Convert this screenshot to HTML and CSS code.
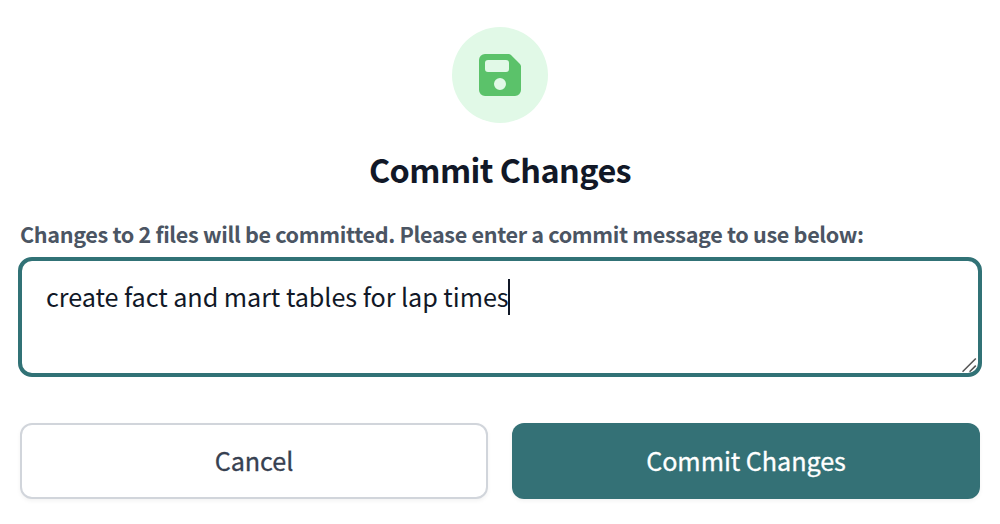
FILE: index.html
```html
<!DOCTYPE html>
<html lang="en">
<head>
<meta charset="utf-8">
<title>Commit Changes</title>
<link rel="stylesheet" href="styles.css">
</head>
<body>
<main class="dialog">
  <div class="badge">
    <svg class="badge-icon" viewBox="0 0 42 42" aria-hidden="true">
      <path fill="#5bc26a" fill-rule="evenodd" d="M6 0H29.5Q31 0 32 1L41 10Q42 11 42 12.5V36a6 6 0 0 1-6 6H6a6 6 0 0 1-6-6V6a6 6 0 0 1 6-6ZM9 6a3 3 0 0 0-3 3v6a3 3 0 0 0 3 3H27a3 3 0 0 0 3-3V9a3 3 0 0 0-3-3ZM21 24a6 6 0 1 0 0 12a6 6 0 0 0 0-12Z"/>
    </svg>
  </div>
  <h1 class="title">Commit Changes</h1>
  <p class="label">Changes to 2 files will be committed. Please enter a commit message to use below:</p>
  <div class="message" role="textbox" aria-multiline="true">
    <span class="message-text">create fact and mart tables for lap times</span><span class="caret"></span>
    <svg class="grip" viewBox="0 0 16 16" aria-hidden="true"><path d="M.5 14.8 13.8 1.5M7.6 14.8 13.8 8.6" stroke="#555" stroke-width="1.6" fill="none"/></svg>
  </div>
  <div class="actions">
    <button class="button cancel" type="button">Cancel</button>
    <button class="button commit" type="button">Commit Changes</button>
  </div>
</main>
</body>
</html>
```
FILE: styles.css
```css
* { box-sizing: border-box; }
body {
  margin: 0;
  background: #fff;
  color: #111827;
  font-family: "Noto Sans CJK SC", "Noto Sans", sans-serif;
}
.dialog {
  display: flex;
  flex-direction: column;
  height: 524px;
  padding: 27px 18px 0;
}
.badge {
  display: flex;
  align-items: center;
  justify-content: center;
  align-self: center;
  width: 96px;
  height: 96px;
  border-radius: 50%;
  background: #e1f9e7;
}
.badge-icon { width: 42px; height: 42px; }
.title {
  margin: 22px 0 0;
  height: 48px;
  line-height: 48px;
  font-size: 32.4px;
  font-weight: 600;
  letter-spacing: -.58px;
  text-align: center;
}
.label {
  margin: 25px 0 0 2px;
  height: 32px;
  line-height: 32px;
  font-size: 21.6px;
  font-weight: 600;
  letter-spacing: -.345px;
  color: #4b5563;
  white-space: nowrap;
}
.message {
  position: relative;
  display: flex;
  align-items: flex-start;
  margin-top: 7px;
  height: 120px;
  padding: 18px 24px;
  border: 4px solid #317276;
  border-radius: 14px;
  font-size: 25.2px;
  line-height: 36px;
  white-space: nowrap;
}
.message-text { height: 36px; margin-top: -1px; letter-spacing: -.06px; }
.caret { width: 2px; height: 36px; margin-left: -1px; background: #111827; }
.grip { position: absolute; right: 0; bottom: 0; width: 16px; height: 16px; }
.actions {
  display: grid;
  grid-template-columns: 1fr 1fr;
  gap: 24px;
  margin: 46px 2px 0;
}
.button {
  height: 76px;
  padding: 0 0 2px;
  border: 0;
  border-radius: 12px;
  box-shadow: 0 2px 4px rgba(0, 0, 0, .05);
  font-family: inherit;
  font-size: 25.2px;
  font-weight: 400;
  line-height: 36px;
  letter-spacing: -.06px;
  -webkit-text-stroke: .3px currentColor;
}
.cancel { border: 2px solid #d1d5db; background: #fff; color: #374151; }
.commit { background: #347176; color: #fff; }
```
